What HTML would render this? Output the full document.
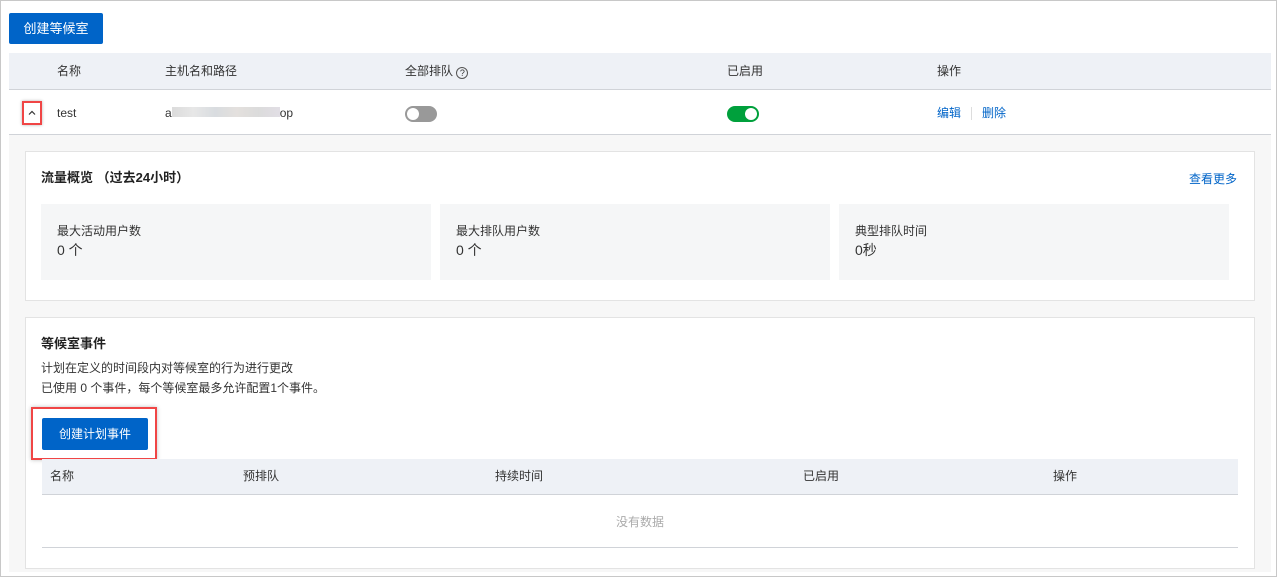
<!DOCTYPE html>
<html><head><meta charset="utf-8"><style>
*{box-sizing:border-box;margin:0;padding:0}
body{width:1277px;height:577px;overflow:hidden;background:#fff;font-family:"Liberation Sans","Noto Sans CJK SC",sans-serif;font-size:12px;line-height:16px;color:#333;position:relative}
.a{position:absolute}
.frame{left:0;top:0;width:1277px;height:577px;border:1px solid #c8c8c8}
.btn{background:#0064c8;color:#fff;border-radius:2px;text-align:center}
.hdr{background:#eef1f6;border-bottom:1px solid #d0d3d8}
.card{background:#fff;border:1px solid #e3e3e3}
.stat{background:#f5f6f7}
.lnk{color:#0064c8}
</style></head><body>
<div class="a frame"></div>
<div class="a btn" style="left:9px;top:13px;width:94px;height:31px;line-height:31px;font-size:13px">创建等候室</div>
<div class="a hdr" style="left:9px;top:53px;width:1262px;height:37px"></div>
<div class="a" style="left:57px;top:63px">名称</div>
<div class="a" style="left:165px;top:63px">主机名和路径</div>
<div class="a" style="left:405px;top:63px">全部排队 <span style="display:inline-block;width:12px;height:12px;border:1px solid #555;border-radius:50%;font-size:9px;line-height:10px;text-align:center;vertical-align:-1px">?</span></div>
<div class="a" style="left:727px;top:63px">已启用</div>
<div class="a" style="left:937px;top:63px">操作</div>
<div class="a" style="left:9px;top:134px;width:1262px;height:1px;background:#d0d3d8"></div>
<div class="a" style="left:22px;top:101px;width:20px;height:24px;border:2px solid #f04545;box-shadow:0 0 3px rgba(0,0,0,.3)"><svg width="16" height="20" style="position:absolute;left:0;top:0"><path d="M5 11.5 L8 8.5 L11 11.5" fill="none" stroke="#333" stroke-width="1.2"/></svg></div>
<div class="a" style="left:57px;top:105px">test</div>
<div class="a" style="left:165px;top:105px">a<span style="display:inline-block;width:108px;height:10px;background:linear-gradient(90deg,#ccc,#ddd,#c8cdd2,#d8d3cf,#ccc,#d5d0da);opacity:.7;vertical-align:0"></span>op</div>
<div class="a" style="left:405px;top:106px;width:32px;height:16px;border-radius:8px;background:#999"><div style="position:absolute;left:2px;top:2px;width:12px;height:12px;border-radius:50%;background:#fff"></div></div>
<div class="a" style="left:727px;top:106px;width:32px;height:16px;border-radius:8px;background:#00a03c"><div style="position:absolute;right:2px;top:2px;width:12px;height:12px;border-radius:50%;background:#fff"></div></div>
<div class="a lnk" style="left:937px;top:105px">编辑</div>
<div class="a" style="left:971px;top:107px;width:1px;height:13px;background:#ddd"></div>
<div class="a lnk" style="left:982px;top:105px">删除</div>
<div class="a" style="left:9px;top:135px;width:1262px;height:437px;background:#f7f7f7"></div>
<div class="a card" style="left:25px;top:151px;width:1230px;height:150px"></div>
<div class="a" style="left:41px;top:170px;font-weight:bold;font-size:13px;color:#222">流量概览 （过去24小时）</div>
<div class="a lnk" style="left:1189px;top:171px">查看更多</div>
<div class="a stat" style="left:41px;top:204px;width:390px;height:76px"><div style="position:absolute;left:16px;top:19px">最大活动用户数</div><div style="position:absolute;left:16px;top:38px;font-size:14px">0 个</div></div>
<div class="a stat" style="left:440px;top:204px;width:390px;height:76px"><div style="position:absolute;left:16px;top:19px">最大排队用户数</div><div style="position:absolute;left:16px;top:38px;font-size:14px">0 个</div></div>
<div class="a stat" style="left:839px;top:204px;width:390px;height:76px"><div style="position:absolute;left:16px;top:19px">典型排队时间</div><div style="position:absolute;left:16px;top:38px;font-size:14px">0秒</div></div>
<div class="a card" style="left:25px;top:317px;width:1230px;height:252px"></div>
<div class="a" style="left:41px;top:336px;font-weight:bold;font-size:13px;color:#222">等候室事件</div>
<div class="a" style="left:41px;top:360px">计划在定义的时间段内对等候室的行为进行更改</div>
<div class="a" style="left:41px;top:380px">已使用 0 个事件，每个等候室最多允许配置1个事件。</div>
<div class="a" style="left:31px;top:407px;width:126px;height:53px;border:2px solid #f04545;box-shadow:0 0 4px rgba(0,0,0,.25)"></div>
<div class="a btn" style="left:42px;top:418px;width:106px;height:32px;line-height:32px">创建计划事件</div>
<div class="a hdr" style="left:42px;top:459px;width:1196px;height:36px"></div>
<div class="a" style="left:50px;top:468px">名称</div>
<div class="a" style="left:243px;top:468px">预排队</div>
<div class="a" style="left:495px;top:468px">持续时间</div>
<div class="a" style="left:803px;top:468px">已启用</div>
<div class="a" style="left:1053px;top:468px">操作</div>
<div class="a" style="left:616px;top:514px;color:#aaa">没有数据</div>
<div class="a" style="left:42px;top:547px;width:1196px;height:1px;background:#d0d3d8"></div>
</body></html>
